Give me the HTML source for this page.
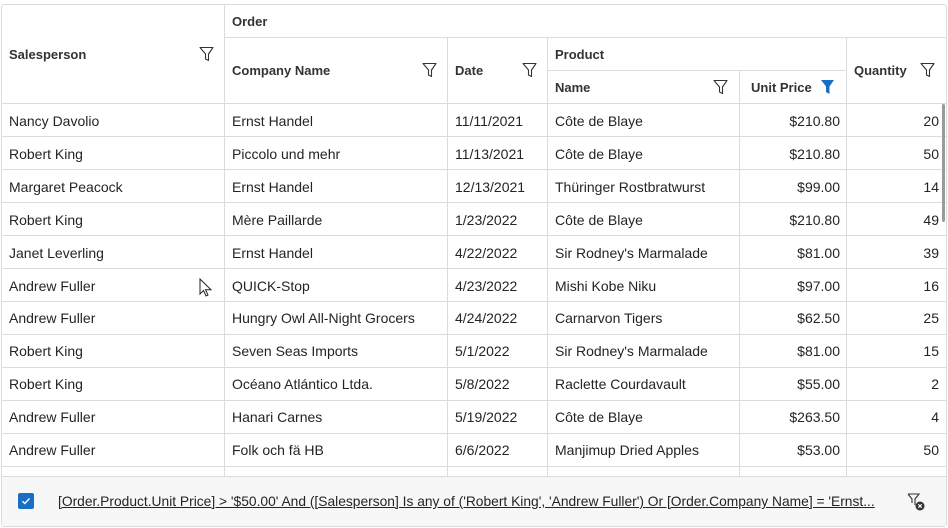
<!DOCTYPE html>
<html><head><meta charset="utf-8"><style>
*{margin:0;padding:0;box-sizing:border-box}
body{width:948px;height:528px;background:#fff;font-family:"Liberation Sans",sans-serif;font-size:14px;color:#242424;position:relative;overflow:hidden}
.h{position:absolute;height:1px;background:#dcdcdc}
.v{position:absolute;width:1px;background:#dcdcdc}
.t{position:absolute;white-space:nowrap;line-height:16px}
.b{font-weight:bold;color:#333;font-size:13px}
.r{text-align:right}
svg.f{position:absolute}
</style></head><body>
<div style="position:absolute;left:1px;top:4px;width:946px;height:523px;border:1px solid #dcdcdc;border-radius:3px"></div>
<div style="position:absolute;left:2px;top:476px;width:944px;height:50px;background:#f7f7f7"></div>
<div class="h" style="left:224px;width:722px;top:37px"></div>
<div class="h" style="left:547px;width:299px;top:70px"></div>
<div class="h" style="left:2px;width:944px;top:103px"></div>
<div class="v" style="left:224px;top:5px;height:471px"></div>
<div class="v" style="left:447px;top:37px;height:439px"></div>
<div class="v" style="left:547px;top:37px;height:439px"></div>
<div class="v" style="left:739px;top:70px;height:406px"></div>
<div class="v" style="left:846px;top:37px;height:439px"></div>
<div class="h" style="left:2px;width:944px;top:136px"></div>
<div class="h" style="left:2px;width:944px;top:169px"></div>
<div class="h" style="left:2px;width:944px;top:202px"></div>
<div class="h" style="left:2px;width:944px;top:235px"></div>
<div class="h" style="left:2px;width:944px;top:268px"></div>
<div class="h" style="left:2px;width:944px;top:301px"></div>
<div class="h" style="left:2px;width:944px;top:334px"></div>
<div class="h" style="left:2px;width:944px;top:367px"></div>
<div class="h" style="left:2px;width:944px;top:400px"></div>
<div class="h" style="left:2px;width:944px;top:433px"></div>
<div class="h" style="left:2px;width:944px;top:466px"></div>
<div class="h" style="left:2px;width:944px;top:476px"></div>
<div style="position:absolute;left:942px;top:104px;width:3px;height:118px;background:#9a9a9a;border-radius:2px"></div>
<div class="t b" style="left:9px;top:47px">Salesperson</div>
<div class="t b" style="left:232px;top:14px">Order</div>
<div class="t b" style="left:232px;top:63px">Company Name</div>
<div class="t b" style="left:455px;top:63px">Date</div>
<div class="t b" style="left:555px;top:47px">Product</div>
<div class="t b" style="left:555px;top:80px">Name</div>
<div class="t b" style="left:751px;top:80px">Unit Price</div>
<div class="t b" style="left:854px;top:63px">Quantity</div>
<svg class="f" style="left:199px;top:46px" width="15" height="16" viewBox="0 0 15 16"><path d="M1 1.5h13L9.5 8v6.5L6.5 13V8z" fill="none" stroke="#333" stroke-width="1.1" stroke-linejoin="round"/></svg>
<svg class="f" style="left:422px;top:62px" width="15" height="16" viewBox="0 0 15 16"><path d="M1 1.5h13L9.5 8v6.5L6.5 13V8z" fill="none" stroke="#333" stroke-width="1.1" stroke-linejoin="round"/></svg>
<svg class="f" style="left:522px;top:62px" width="15" height="16" viewBox="0 0 15 16"><path d="M1 1.5h13L9.5 8v6.5L6.5 13V8z" fill="none" stroke="#333" stroke-width="1.1" stroke-linejoin="round"/></svg>
<svg class="f" style="left:713px;top:79px" width="15" height="16" viewBox="0 0 15 16"><path d="M1 1.5h13L9.5 8v6.5L6.5 13V8z" fill="none" stroke="#333" stroke-width="1.1" stroke-linejoin="round"/></svg>
<svg class="f" style="left:820px;top:79px" width="15" height="16" viewBox="0 0 15 16"><path d="M1 1h13L9.5 7.5v7.5L6 13V7.5z" fill="#1a6fc4"/></svg>
<svg class="f" style="left:920px;top:62px" width="15" height="16" viewBox="0 0 15 16"><path d="M1 1.5h13L9.5 8v6.5L6.5 13V8z" fill="none" stroke="#333" stroke-width="1.1" stroke-linejoin="round"/></svg>
<div class="t" style="left:9px;top:113px">Nancy Davolio</div><div class="t" style="left:232px;top:113px">Ernst Handel</div><div class="t" style="left:455px;top:113px">11/11/2021</div><div class="t" style="left:555px;top:113px">Côte de Blaye</div><div class="t r" style="right:108px;top:113px">$210.80</div><div class="t r" style="right:9px;top:113px">20</div>
<div class="t" style="left:9px;top:146px">Robert King</div><div class="t" style="left:232px;top:146px">Piccolo und mehr</div><div class="t" style="left:455px;top:146px">11/13/2021</div><div class="t" style="left:555px;top:146px">Côte de Blaye</div><div class="t r" style="right:108px;top:146px">$210.80</div><div class="t r" style="right:9px;top:146px">50</div>
<div class="t" style="left:9px;top:179px">Margaret Peacock</div><div class="t" style="left:232px;top:179px">Ernst Handel</div><div class="t" style="left:455px;top:179px">12/13/2021</div><div class="t" style="left:555px;top:179px">Thüringer Rostbratwurst</div><div class="t r" style="right:108px;top:179px">$99.00</div><div class="t r" style="right:9px;top:179px">14</div>
<div class="t" style="left:9px;top:212px">Robert King</div><div class="t" style="left:232px;top:212px">Mère Paillarde</div><div class="t" style="left:455px;top:212px">1/23/2022</div><div class="t" style="left:555px;top:212px">Côte de Blaye</div><div class="t r" style="right:108px;top:212px">$210.80</div><div class="t r" style="right:9px;top:212px">49</div>
<div class="t" style="left:9px;top:245px">Janet Leverling</div><div class="t" style="left:232px;top:245px">Ernst Handel</div><div class="t" style="left:455px;top:245px">4/22/2022</div><div class="t" style="left:555px;top:245px">Sir Rodney's Marmalade</div><div class="t r" style="right:108px;top:245px">$81.00</div><div class="t r" style="right:9px;top:245px">39</div>
<div class="t" style="left:9px;top:278px">Andrew Fuller</div><div class="t" style="left:232px;top:278px">QUICK-Stop</div><div class="t" style="left:455px;top:278px">4/23/2022</div><div class="t" style="left:555px;top:278px">Mishi Kobe Niku</div><div class="t r" style="right:108px;top:278px">$97.00</div><div class="t r" style="right:9px;top:278px">16</div>
<div class="t" style="left:9px;top:310px">Andrew Fuller</div><div class="t" style="left:232px;top:310px">Hungry Owl All-Night Grocers</div><div class="t" style="left:455px;top:310px">4/24/2022</div><div class="t" style="left:555px;top:310px">Carnarvon Tigers</div><div class="t r" style="right:108px;top:310px">$62.50</div><div class="t r" style="right:9px;top:310px">25</div>
<div class="t" style="left:9px;top:343px">Robert King</div><div class="t" style="left:232px;top:343px">Seven Seas Imports</div><div class="t" style="left:455px;top:343px">5/1/2022</div><div class="t" style="left:555px;top:343px">Sir Rodney's Marmalade</div><div class="t r" style="right:108px;top:343px">$81.00</div><div class="t r" style="right:9px;top:343px">15</div>
<div class="t" style="left:9px;top:376px">Robert King</div><div class="t" style="left:232px;top:376px">Océano Atlántico Ltda.</div><div class="t" style="left:455px;top:376px">5/8/2022</div><div class="t" style="left:555px;top:376px">Raclette Courdavault</div><div class="t r" style="right:108px;top:376px">$55.00</div><div class="t r" style="right:9px;top:376px">2</div>
<div class="t" style="left:9px;top:409px">Andrew Fuller</div><div class="t" style="left:232px;top:409px">Hanari Carnes</div><div class="t" style="left:455px;top:409px">5/19/2022</div><div class="t" style="left:555px;top:409px">Côte de Blaye</div><div class="t r" style="right:108px;top:409px">$263.50</div><div class="t r" style="right:9px;top:409px">4</div>
<div class="t" style="left:9px;top:442px">Andrew Fuller</div><div class="t" style="left:232px;top:442px">Folk och fä HB</div><div class="t" style="left:455px;top:442px">6/6/2022</div><div class="t" style="left:555px;top:442px">Manjimup Dried Apples</div><div class="t r" style="right:108px;top:442px">$53.00</div><div class="t r" style="right:9px;top:442px">50</div>
<svg style="position:absolute;left:199px;top:278px" width="14" height="20" viewBox="0 0 14 20"><path d="M1 1v15l3.5-3.5 2.5 5.5 2-1-2.5-5.2H12z" fill="#fff" stroke="#222" stroke-width="1"/></svg>
<div style="position:absolute;left:18px;top:493px;width:16px;height:16px;background:#1a6fc4;border-radius:2px"></div>
<svg style="position:absolute;left:18px;top:493px" width="16" height="16" viewBox="0 0 16 16"><path d="M4.5 8.3l2.3 2.2 4.7-5" fill="none" stroke="#fff" stroke-width="1.4"/></svg>
<div class="t" style="left:58px;top:494px;text-decoration:underline;color:#242424;font-size:13.8px">[Order.Product.Unit Price] &gt; '$50.00' And ([Salesperson] Is any of ('Robert King', 'Andrew Fuller') Or [Order.Company Name] = 'Ernst...</div>
<svg style="position:absolute;left:906px;top:492px" width="20" height="20" viewBox="0 0 20 20"><path d="M2 2h11L9 7v6" fill="none" stroke="#333" stroke-width="1.1"/><path d="M2 2l4 5v4" fill="none" stroke="#333" stroke-width="1.1"/><circle cx="14" cy="14" r="4.5" fill="#333"/><path d="M12.3 12.3l3.4 3.4M15.7 12.3l-3.4 3.4" stroke="#fff" stroke-width="1.1"/></svg>
</body></html>
